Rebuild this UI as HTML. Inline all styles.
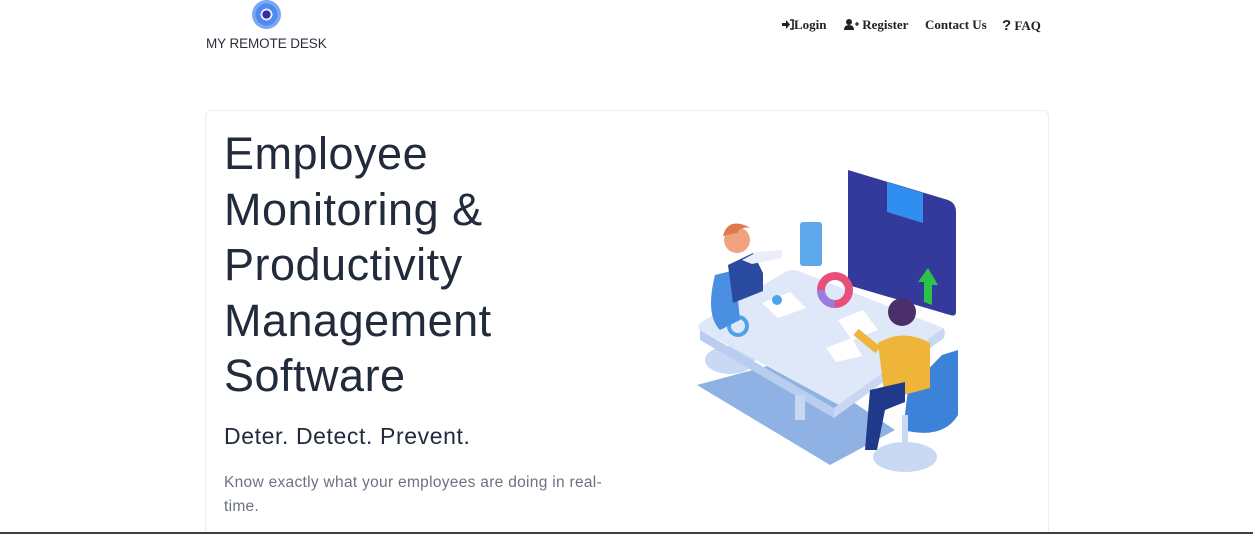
<!DOCTYPE html>
<html><head><meta charset="utf-8"><style>
*{margin:0;padding:0;box-sizing:border-box}
html,body{width:1253px;height:534px;overflow:hidden}
body{background:#fff;font-family:"Liberation Sans",sans-serif;position:relative}
.logo{position:absolute;left:252px;top:0;width:29px;height:29px;border-radius:50%;background:radial-gradient(circle,#3b2aa8 0 4px,#e8eaf6 4px 6px,#4f8af0 6px 11px,#7aa8f5 11px 14.5px)}
.brand{position:absolute;left:206px;top:36px;font-size:13.5px;color:#2a2f3a;letter-spacing:-0.1px}
.nav{position:absolute;top:17px;font-family:"Liberation Serif",serif;font-weight:bold;font-size:13px;color:#222;white-space:nowrap}
.nav svg{vertical-align:-1px}
.card{position:absolute;left:205px;top:110px;width:844px;height:440px;border:1px solid #eceef2;border-radius:6px}
h1{position:absolute;left:224px;top:126px;font-size:45px;font-weight:normal;line-height:55.5px;color:#222b3c;letter-spacing:0.5px}
.sub{position:absolute;left:224px;top:423px;font-size:23px;color:#222b3c;letter-spacing:0.6px}
.p{position:absolute;left:224px;top:471px;width:400px;font-size:15.5px;line-height:24px;color:#6b7280;letter-spacing:0.3px}
.bar{position:absolute;left:0;top:532px;width:1253px;height:2px;background:#3a3f47}
</style></head><body>
<div class="logo"></div>
<div class="brand">MY REMOTE DESK</div>
<div class="nav" style="left:782px"><svg width="12" height="11" viewBox="0 0 12 11"><path d="M0,4h4V1l4,4.5-4,4.5V7H0z" fill="#222"/><path d="M8,1h3v9H8" fill="none" stroke="#222" stroke-width="1.6"/></svg>Login</div>
<div class="nav" style="left:844px"><svg width="15" height="11" viewBox="0 0 15 11"><circle cx="5" cy="3" r="3" fill="#222"/><path d="M0,11q0,-5 5,-5q5,0 5,5z" fill="#222"/><path d="M11,5h4M13,3v4" stroke="#222" stroke-width="1.3"/></svg> Register</div>
<div class="nav" style="left:925px">Contact Us</div>
<div class="nav" style="left:1002px"><span style="font-family:'Liberation Sans',sans-serif;font-size:15px">?</span> FAQ</div>
<div class="card"></div>
<h1>Employee<br>Monitoring &amp;<br>Productivity<br>Management<br>Software</h1>
<div class="sub">Deter. Detect. Prevent.</div>
<div class="p">Know exactly what your employees are doing in real-<br>time.</div>
<svg style="position:absolute;left:680px;top:160px" width="300" height="320" viewBox="0 0 300 320">
<polygon points="17,225 110,200 215,270 150,305" fill="#8fb1e3"/>
<ellipse cx="50" cy="200" rx="25" ry="14" fill="#c9d8f3"/>
<path d="M168,10 l100,30 q8,3 8,12 v100 q0,5 -6,3 l-102,-30z" fill="#343a9c"/>
<polygon points="207,22 243,33 243,63 207,52" fill="#2f8ef0"/>
<polygon points="248,108 238,122 244,122 244,142 252,145 252,125 258,125" fill="#2bc24a"/>
<path d="M20,170 q-5,-5 5,-10 l80,-48 q8,-4 16,0 l140,55 q8,5 2,10 l-90,66 q-8,5 -16,1z" fill="#dfe8f8"/>
<path d="M20,170 l134,78 0,10 -134,-78z" fill="#b9cdef"/>
<path d="M154,248 l110,-80 0,10 -110,80z" fill="#c8d8f3"/>
<rect x="115" y="235" width="10" height="25" fill="#c8d8f3"/>
<circle cx="155" cy="130" r="14" fill="none" stroke="#e8507a" stroke-width="8"/>
<path d="M141,130 a14,14 0 0 0 14,14" fill="none" stroke="#9b7be0" stroke-width="8"/>
<circle cx="58" cy="166" r="9" fill="none" stroke="#4da3e8" stroke-width="4"/>
<polygon points="82,143 110,132 126,148 98,158" fill="#fff"/>
<polygon points="158,160 183,150 198,170 172,180" fill="#fff"/>
<polygon points="146,188 172,178 182,196 156,202" fill="#fff"/>
<circle cx="97" cy="140" r="5" fill="#4da3e8"/>
<rect x="120" y="62" width="22" height="44" rx="3" fill="#5ea8ec"/>
<path d="M35,115 q-10,40 5,55 l20,-10 -5,-50z" fill="#4b8fe0"/>
<path d="M48,105 l25,-12 10,20 0,18 -30,12z" fill="#2a4aa0"/>
<path d="M62,100 l15,-8 25,-2 0,8 -30,6z" fill="#e9eef8"/>
<circle cx="57" cy="80" r="13" fill="#f2a27e"/><path d="M43,76 q5,-20 28,-8 q-10,-2 -14,5z" fill="#e07a4a"/>
<path d="M262,195 l16,-5 0,65 q-15,25 -55,15 l5,-40z" fill="#3c82d8"/>
<ellipse cx="225" cy="297" rx="32" ry="15" fill="#c9d8f3"/>
<rect x="222" y="255" width="6" height="40" fill="#c9d8f3"/>
<path d="M198,183 q25,-15 52,0 l0,45 -45,12z" fill="#efb53a"/>
<path d="M190,230 l35,-8 0,20 -20,8 -8,40 -12,0z" fill="#1f3a8a"/>
<circle cx="222" cy="152" r="14" fill="#4b2f6a"/>
<path d="M198,190 l-22,-18" stroke="#efb53a" stroke-width="8"/>
</svg>
<div class="bar"></div>
</body></html>
